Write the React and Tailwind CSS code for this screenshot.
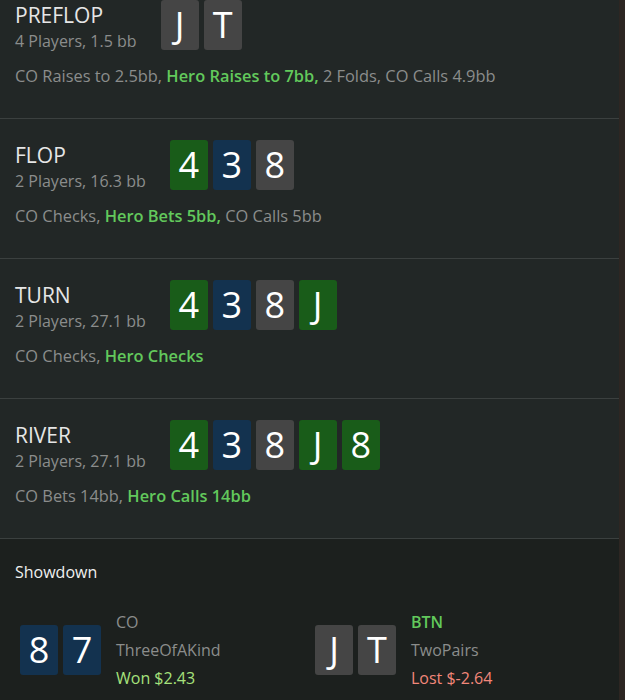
const cardColors = {
    g: "bg-[#195c19]",
    b: "bg-[#13324f]",
    n: "bg-[#454545]",
};

const streets = [
    {
        name: "PREFLOP",
        info: "4 Players, 1.5 bb",
        cards: [["J", "n"], ["T", "n"]],
        actions: [
            ["CO Raises to 2.5bb, ", false],
            ["Hero Raises to 7bb,", true],
            [" 2 Folds, CO Calls 4.9bb", false],
        ],
    },
    {
        name: "FLOP",
        info: "2 Players, 16.3 bb",
        cards: [["4", "g"], ["3", "b"], ["8", "n"]],
        actions: [
            ["CO Checks, ", false],
            ["Hero Bets 5bb,", true],
            [" CO Calls 5bb", false],
        ],
    },
    {
        name: "TURN",
        info: "2 Players, 27.1 bb",
        cards: [["4", "g"], ["3", "b"], ["8", "n"], ["J", "g"]],
        actions: [
            ["CO Checks, ", false],
            ["Hero Checks", true],
        ],
    },
    {
        name: "RIVER",
        info: "2 Players, 27.1 bb",
        cards: [["4", "g"], ["3", "b"], ["8", "n"], ["J", "g"], ["8", "g"]],
        actions: [
            ["CO Bets 14bb, ", false],
            ["Hero Calls 14bb", true],
        ],
    },
];

const Card = ({ rank, color }) => (
    <div
        className={`w-[38px] h-[50px] rounded-[3px] flex items-center justify-center text-white text-[36px] leading-none ${cardColors[color]}`}
    >
        {rank}
    </div>
);

const Street = ({ street }) => (
    <div className="px-[15px] pt-[21px] pb-[31px] border-b border-[#3b403f]">
        <div className="flex items-start">
            <div>
                <div className="text-[21px] leading-[30px] text-[#e6e6e6]">
                    {street.name}
                </div>
                <div className="text-[16px] leading-[22px] text-[#8b8d8c]">
                    {street.info}
                </div>
            </div>
            <div className="flex gap-[5px] ml-[24px]">
                {street.cards.map(([rank, color], i) => (
                    <Card key={i} rank={rank} color={color} />
                ))}
            </div>
        </div>
        <p className="mt-[13px] text-[16.4px] leading-[22px] text-[#8b8d8c]">
            {street.actions.map(([text, hero], i) => (
                <span
                    key={i}
                    className={hero ? "font-semibold text-[#62c95c]" : ""}
                >
                    {text}
                </span>
            ))}
        </p>
    </div>
);

const Player = ({ cards, pos, hero, hand, result, won }) => (
    <div className="flex items-center">
        <div className="flex gap-[5px]">
            {cards.map(([rank, color], i) => (
                <Card key={i} rank={rank} color={color} />
            ))}
        </div>
        <div className="ml-[15px] text-[16px] leading-[28px]">
            <div className={hero ? "font-semibold text-[#62c95c]" : "text-[#8b8d8c]"}>
                {pos}
            </div>
            <div className="text-[#8b8d8c]">{hand}</div>
            <div className={won ? "text-[#a6e27c]" : "text-[#f2877a]"}>
                {result}
            </div>
        </div>
    </div>
);

const App = () => {
    return (
        <div
            className="flex h-[700px] w-[625px] overflow-hidden bg-[#222726]"
            style={{ fontFamily: '"Open Sans", "Noto Sans", sans-serif' }}
        >
            <div className="flex-1 flex flex-col">
                <div className="-mt-[21px]">
                    {streets.map((s) => (
                        <Street key={s.name} street={s} />
                    ))}
                </div>
                <div className="flex-1 bg-[#1c201e] px-[15px] pt-[21px]">
                    <h2 className="text-[16px] leading-[24px] font-medium text-[#f0f0f0]">
                        Showdown
                    </h2>
                    <div className="grid grid-cols-[295px_1fr] pl-[5px] mt-[24px]">
                        <Player
                            cards={[["8", "b"], ["7", "b"]]}
                            pos="CO"
                            hand="ThreeOfAKind"
                            result="Won $2.43"
                            won
                        />
                        <Player
                            cards={[["J", "n"], ["T", "n"]]}
                            pos="BTN"
                            hero
                            hand="TwoPairs"
                            result="Lost $-2.64"
                        />
                    </div>
                </div>
            </div>
            <div className="w-[6px] bg-[#2d2622]" />
        </div>
    );
};

export default App;
